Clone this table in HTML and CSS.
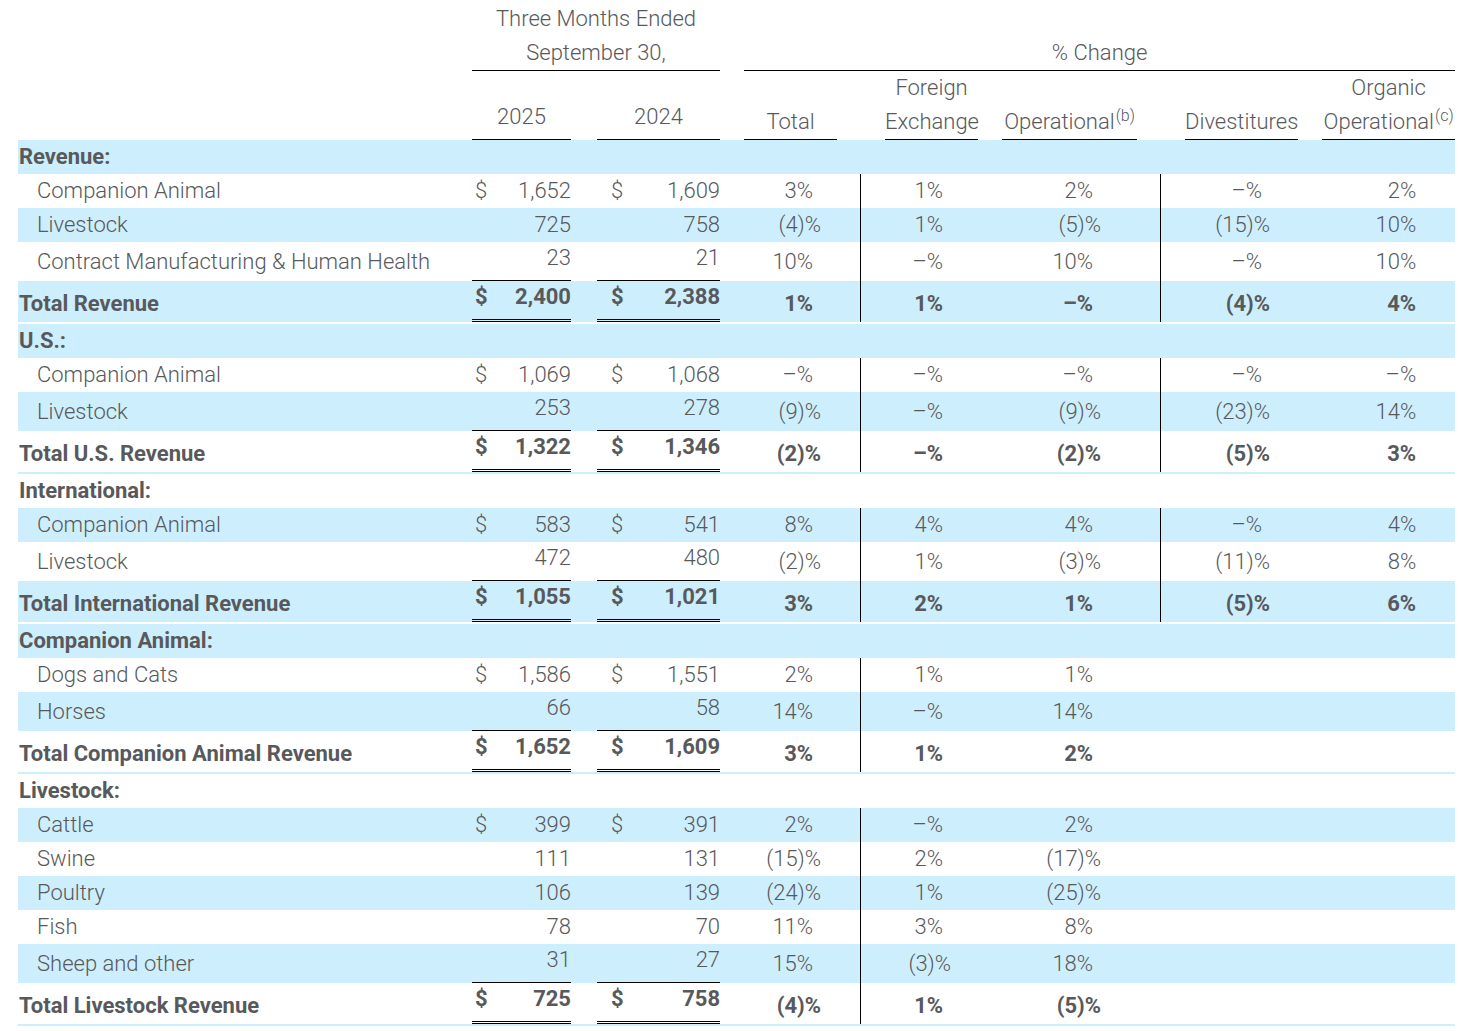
FILE: index.html
```html
<!DOCTYPE html>
<html lang="en">
<head>
<meta charset="utf-8">
<title>Revenue by segment</title>
<link rel="stylesheet" href="styles.css">
</head>
<body>
<table class="fin">
<colgroup>
<col class="c-label"><col class="c-d1"><col class="c-n1"><col class="c-g26"><col class="c-d2"><col class="c-n2"><col class="c-g24">
<col class="c-pt"><col class="c-g23"><col class="c-g25"><col class="c-pf"><col class="c-g24"><col class="c-po"><col class="c-g23"><col class="c-g25"><col class="c-pd"><col class="c-g24"><col class="c-pg">
</colgroup>
<tbody>
<tr class="h1">
<td></td>
<td colspan="5" class="hc u">Three Months Ended<br>September 30,</td>
<td></td>
<td colspan="11" class="hc u">% Change</td>
</tr>
<tr class="h2">
<td></td>
<td colspan="2" class="hc u yr">2025</td><td></td>
<td colspan="2" class="hc u yr">2024</td><td></td>
<td class="hc u">Total</td><td></td><td></td>
<td class="hc u">Foreign<br>Exchange</td><td></td>
<td class="hc u">Operational<sup>(b)</sup></td><td></td><td></td>
<td class="hc u">Divestitures</td><td></td>
<td class="hc u">Organic<br>Operational<sup>(c)</sup></td>
</tr>

<tr class="r b"><td colspan="18" class="sh">Revenue:</td></tr>
<tr class="r">
<td class="l">Companion Animal</td>
<td class="d1">$</td><td class="n">1,652</td><td></td><td class="d2">$</td><td class="n">1,609</td><td></td>
<td class="p pt">3%</td><td></td><td class="v"></td><td class="p pf">1%</td><td></td><td class="p po">2%</td><td></td><td class="v"></td><td class="p pd">–%</td><td></td><td class="p pg">2%</td>
</tr>
<tr class="r b">
<td class="l">Livestock</td>
<td class="d1"></td><td class="n">725</td><td></td><td class="d2"></td><td class="n">758</td><td></td>
<td class="p pt"><span class="ng">(4)%</span></td><td></td><td class="v"></td><td class="p pf">1%</td><td></td><td class="p po"><span class="ng">(5)%</span></td><td></td><td class="v"></td><td class="p pd"><span class="ng">(15)%</span></td><td></td><td class="p pg">10%</td>
</tr>
<tr class="pre">
<td class="l">Contract Manufacturing &amp; Human Health</td>
<td class="d1 a"></td><td class="n a">23</td><td></td><td class="d2 a"></td><td class="n a">21</td><td></td>
<td class="p pt">10%</td><td></td><td class="v"></td><td class="p pf">–%</td><td></td><td class="p po">10%</td><td></td><td class="v"></td><td class="p pd">–%</td><td></td><td class="p pg">10%</td>
</tr>
<tr class="tot b">
<td class="lt">Total Revenue</td>
<td class="d1 a">$</td><td class="n a">2,400</td><td></td><td class="d2 a">$</td><td class="n a">2,388</td><td></td>
<td class="p pt">1%</td><td></td><td class="v"></td><td class="p pf">1%</td><td></td><td class="p po">–%</td><td></td><td class="v"></td><td class="p pd"><span class="ng">(4)%</span></td><td></td><td class="p pg">4%</td>
</tr>
<tr class="sp"><td colspan="18"></td></tr>

<tr class="r b"><td colspan="18" class="sh">U.S.:</td></tr>
<tr class="r">
<td class="l">Companion Animal</td>
<td class="d1">$</td><td class="n">1,069</td><td></td><td class="d2">$</td><td class="n">1,068</td><td></td>
<td class="p pt">–%</td><td></td><td class="v"></td><td class="p pf">–%</td><td></td><td class="p po">–%</td><td></td><td class="v"></td><td class="p pd">–%</td><td></td><td class="p pg">–%</td>
</tr>
<tr class="pre b">
<td class="l">Livestock</td>
<td class="d1 a"></td><td class="n a">253</td><td></td><td class="d2 a"></td><td class="n a">278</td><td></td>
<td class="p pt"><span class="ng">(9)%</span></td><td></td><td class="v"></td><td class="p pf">–%</td><td></td><td class="p po"><span class="ng">(9)%</span></td><td></td><td class="v"></td><td class="p pd"><span class="ng">(23)%</span></td><td></td><td class="p pg">14%</td>
</tr>
<tr class="tot">
<td class="lt">Total U.S. Revenue</td>
<td class="d1 a">$</td><td class="n a">1,322</td><td></td><td class="d2 a">$</td><td class="n a">1,346</td><td></td>
<td class="p pt"><span class="ng">(2)%</span></td><td></td><td class="v"></td><td class="p pf">–%</td><td></td><td class="p po"><span class="ng">(2)%</span></td><td></td><td class="v"></td><td class="p pd"><span class="ng">(5)%</span></td><td></td><td class="p pg">3%</td>
</tr>
<tr class="sp b"><td colspan="18"></td></tr>

<tr class="r"><td colspan="18" class="sh">International:</td></tr>
<tr class="r b">
<td class="l">Companion Animal</td>
<td class="d1">$</td><td class="n">583</td><td></td><td class="d2">$</td><td class="n">541</td><td></td>
<td class="p pt">8%</td><td></td><td class="v"></td><td class="p pf">4%</td><td></td><td class="p po">4%</td><td></td><td class="v"></td><td class="p pd">–%</td><td></td><td class="p pg">4%</td>
</tr>
<tr class="pre">
<td class="l">Livestock</td>
<td class="d1 a"></td><td class="n a">472</td><td></td><td class="d2 a"></td><td class="n a">480</td><td></td>
<td class="p pt"><span class="ng">(2)%</span></td><td></td><td class="v"></td><td class="p pf">1%</td><td></td><td class="p po"><span class="ng">(3)%</span></td><td></td><td class="v"></td><td class="p pd"><span class="ng">(11)%</span></td><td></td><td class="p pg">8%</td>
</tr>
<tr class="tot b">
<td class="lt">Total International Revenue</td>
<td class="d1 a">$</td><td class="n a">1,055</td><td></td><td class="d2 a">$</td><td class="n a">1,021</td><td></td>
<td class="p pt">3%</td><td></td><td class="v"></td><td class="p pf">2%</td><td></td><td class="p po">1%</td><td></td><td class="v"></td><td class="p pd"><span class="ng">(5)%</span></td><td></td><td class="p pg">6%</td>
</tr>
<tr class="sp"><td colspan="18"></td></tr>

<tr class="r b"><td colspan="18" class="sh">Companion Animal:</td></tr>
<tr class="r">
<td class="l">Dogs and Cats</td>
<td class="d1">$</td><td class="n">1,586</td><td></td><td class="d2">$</td><td class="n">1,551</td><td></td>
<td class="p pt">2%</td><td></td><td class="v"></td><td class="p pf">1%</td><td></td><td class="p po">1%</td><td></td><td></td><td class="p pd"></td><td></td><td class="p pg"></td>
</tr>
<tr class="pre b">
<td class="l">Horses</td>
<td class="d1 a"></td><td class="n a">66</td><td></td><td class="d2 a"></td><td class="n a">58</td><td></td>
<td class="p pt">14%</td><td></td><td class="v"></td><td class="p pf">–%</td><td></td><td class="p po">14%</td><td></td><td></td><td class="p pd"></td><td></td><td class="p pg"></td>
</tr>
<tr class="tot">
<td class="lt">Total Companion Animal Revenue</td>
<td class="d1 a">$</td><td class="n a">1,652</td><td></td><td class="d2 a">$</td><td class="n a">1,609</td><td></td>
<td class="p pt">3%</td><td></td><td class="v"></td><td class="p pf">1%</td><td></td><td class="p po">2%</td><td></td><td></td><td class="p pd"></td><td></td><td class="p pg"></td>
</tr>
<tr class="sp b"><td colspan="18"></td></tr>

<tr class="r"><td colspan="18" class="sh">Livestock:</td></tr>
<tr class="r b">
<td class="l">Cattle</td>
<td class="d1">$</td><td class="n">399</td><td></td><td class="d2">$</td><td class="n">391</td><td></td>
<td class="p pt">2%</td><td></td><td class="v"></td><td class="p pf">–%</td><td></td><td class="p po">2%</td><td></td><td></td><td class="p pd"></td><td></td><td class="p pg"></td>
</tr>
<tr class="r">
<td class="l">Swine</td>
<td class="d1"></td><td class="n">111</td><td></td><td class="d2"></td><td class="n">131</td><td></td>
<td class="p pt"><span class="ng">(15)%</span></td><td></td><td class="v"></td><td class="p pf">2%</td><td></td><td class="p po"><span class="ng">(17)%</span></td><td></td><td></td><td class="p pd"></td><td></td><td class="p pg"></td>
</tr>
<tr class="r b">
<td class="l">Poultry</td>
<td class="d1"></td><td class="n">106</td><td></td><td class="d2"></td><td class="n">139</td><td></td>
<td class="p pt"><span class="ng">(24)%</span></td><td></td><td class="v"></td><td class="p pf">1%</td><td></td><td class="p po"><span class="ng">(25)%</span></td><td></td><td></td><td class="p pd"></td><td></td><td class="p pg"></td>
</tr>
<tr class="r">
<td class="l">Fish</td>
<td class="d1"></td><td class="n">78</td><td></td><td class="d2"></td><td class="n">70</td><td></td>
<td class="p pt">11%</td><td></td><td class="v"></td><td class="p pf">3%</td><td></td><td class="p po">8%</td><td></td><td></td><td class="p pd"></td><td></td><td class="p pg"></td>
</tr>
<tr class="pre b">
<td class="l">Sheep and other</td>
<td class="d1 a"></td><td class="n a">31</td><td></td><td class="d2 a"></td><td class="n a">27</td><td></td>
<td class="p pt">15%</td><td></td><td class="v"></td><td class="p pf"><span class="ng">(3)%</span></td><td></td><td class="p po">18%</td><td></td><td></td><td class="p pd"></td><td></td><td class="p pg"></td>
</tr>
<tr class="tot">
<td class="lt">Total Livestock Revenue</td>
<td class="d1 a">$</td><td class="n a">725</td><td></td><td class="d2 a">$</td><td class="n a">758</td><td></td>
<td class="p pt"><span class="ng">(4)%</span></td><td></td><td class="v"></td><td class="p pf">1%</td><td></td><td class="p po"><span class="ng">(5)%</span></td><td></td><td></td><td class="p pd"></td><td></td><td class="p pg"></td>
</tr>
<tr class="sp b"><td colspan="18"></td></tr>
</tbody>
</table>
</body>
</html>
```

FILE: styles.css
```css
html, body {
  margin: 0;
  padding: 0;
  background: #ffffff;
}

body {
  font-family: "Roboto", "Liberation Sans", sans-serif;
  font-weight: 300;
  font-size: 22px;
  color: #58595b;
}

.fin {
  margin-left: 18px;
  border-collapse: separate;
  border-spacing: 0;
  table-layout: fixed;
  width: 1437px;
}

.c-label { width: 454px; }
.c-d1 { width: 28px; }
.c-n1 { width: 71px; }
.c-g26 { width: 26px; }
.c-d2 { width: 28px; }
.c-n2 { width: 95px; }
.c-g24 { width: 24px; }
.c-g23 { width: 23px; }
.c-g25 { width: 25px; }
.c-pt { width: 93px; }
.c-pf { width: 93px; }
.c-po { width: 135px; }
.c-pd { width: 113px; }
.c-pg { width: 133px; }

.fin td {
  padding: 0;
  line-height: 24px;
  vertical-align: middle;
  white-space: nowrap;
}

/* header */
.h1 { height: 71px; }
.h2 { height: 69px; }
.fin .hc {
  text-align: center;
  line-height: 34px;
  vertical-align: bottom;
}
.h1 .hc { padding-top: 2px; }
.fin .u { border-bottom: 1px solid #000; }
.fin .yr { padding-bottom: 5px; }
.hc sup {
  font-size: 16px;
  line-height: 0;
  vertical-align: 8px;
  margin-left: 1px;
}

/* rows */
.r { height: 34px; }
.pre { height: 39px; }
.tot { height: 41px; }
.sp { height: 2px; }
.sp td { line-height: 0; font-size: 0; }
.b { background: #cdeefd; }

.fin .sh {
  font-weight: 700;
  padding-left: 1px;
}
.fin .l { padding-left: 19px; }
.fin .lt { padding-left: 1px; }

.fin .d1 { padding-left: 3px; text-align: left; }
.fin .d2 { padding-left: 14px; text-align: left; }
.fin .n { text-align: right; }
.fin .p { text-align: right; }
.fin .pt { padding-right: 24px; }
.fin .pf { padding-right: 35px; }
.fin .po { padding-right: 44px; }
.fin .pd { padding-right: 36px; }
.fin .pg { padding-right: 39px; }

.ng { margin-right: -8px; }

.fin .v { border-left: 1px solid #000; }

/* pre-total rows: amounts sit high with a rule beneath */
.pre .a {
  vertical-align: top;
  padding-top: 4px;
  border-bottom: 1px solid #000;
}

/* total rows */
.tot td { font-weight: 700; }
.fin .tot td {
  vertical-align: bottom;
  padding-bottom: 6px;
}
.fin .tot .a {
  vertical-align: top;
  padding-top: 4px;
  padding-bottom: 0;
  border-bottom: 3px double #000;
}
.fin .tot .v { padding-bottom: 0; }
```
